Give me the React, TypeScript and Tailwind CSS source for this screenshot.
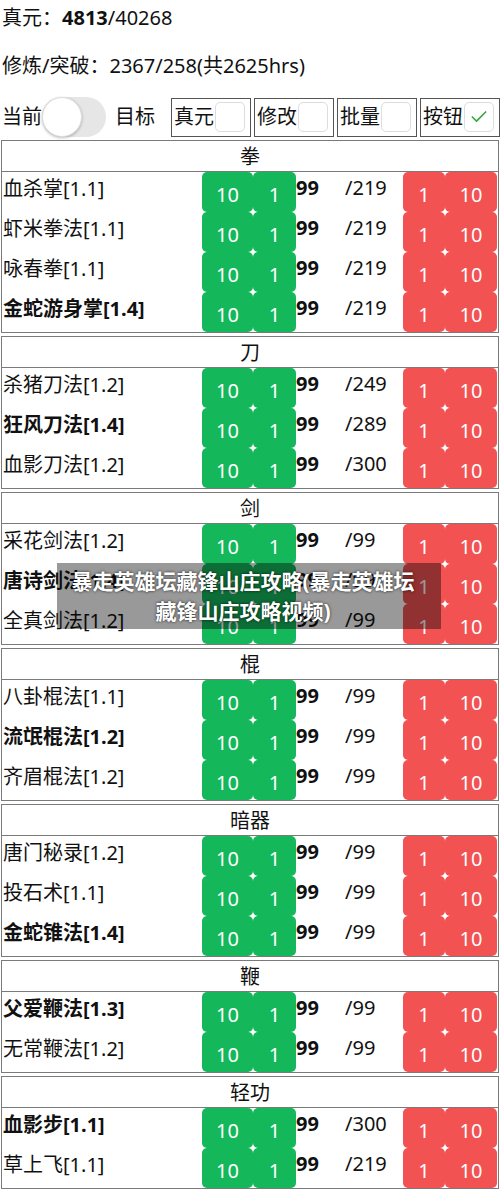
import { Check } from 'lucide-react';

type Skill = {
  name: string;
  bold?: boolean;
  max: number;
};

type Group = {
  title: string;
  skills: Skill[];
};

const groups: Group[] = [
  {
    title: '拳',
    skills: [
      { name: '血杀掌[1.1]', max: 219 },
      { name: '虾米拳法[1.1]', max: 219 },
      { name: '咏春拳[1.1]', max: 219 },
      { name: '金蛇游身掌[1.4]', bold: true, max: 219 },
    ],
  },
  {
    title: '刀',
    skills: [
      { name: '杀猪刀法[1.2]', max: 249 },
      { name: '狂风刀法[1.4]', bold: true, max: 289 },
      { name: '血影刀法[1.2]', max: 300 },
    ],
  },
  {
    title: '剑',
    skills: [
      { name: '采花剑法[1.2]', max: 99 },
      { name: '唐诗剑法[1.4]', bold: true, max: 99 },
      { name: '全真剑法[1.2]', max: 99 },
    ],
  },
  {
    title: '棍',
    skills: [
      { name: '八卦棍法[1.1]', max: 99 },
      { name: '流氓棍法[1.2]', bold: true, max: 99 },
      { name: '齐眉棍法[1.2]', max: 99 },
    ],
  },
  {
    title: '暗器',
    skills: [
      { name: '唐门秘录[1.2]', max: 99 },
      { name: '投石术[1.1]', max: 99 },
      { name: '金蛇锥法[1.4]', bold: true, max: 99 },
    ],
  },
  {
    title: '鞭',
    skills: [
      { name: '父爱鞭法[1.3]', bold: true, max: 99 },
      { name: '无常鞭法[1.2]', max: 99 },
    ],
  },
  {
    title: '轻功',
    skills: [
      { name: '血影步[1.1]', bold: true, max: 300 },
      { name: '草上飞[1.1]', max: 219 },
    ],
  },
];

const Option = ({ label, checked }: { label: string; checked?: boolean }) => (
  <div className="flex h-[39px] w-[80px] items-center border border-[#555] pl-[2px]">
    <span className="w-[40px]">{label}</span>
    <span className="ml-[1px] flex h-[30px] w-[30px] items-center justify-center rounded-[5px] border border-[#ddd] bg-white">
      {checked && <Check className="h-5 w-5 text-[#3aa843]" strokeWidth={2} />}
    </span>
  </div>
);

const Cell = ({ value, w, color }: { value: number; w: string; color: string }) => (
  <div
    className={`flex h-full items-center justify-center rounded-[5px] pt-[5px] text-[20px] text-white ${w} ${color}`}
  >
    {value}
  </div>
);

const SkillRow = ({ skill }: { skill: Skill }) => (
  <div className="flex h-[40px]">
    <div
      className={`w-[200px] pl-[1px] pt-[3px] text-[20px] leading-[28px] ${skill.bold ? 'font-bold' : ''}`}
    >
      {skill.name}
    </div>
    <Cell value={10} w="w-[51px]" color="bg-[#14b85b]" />
    <Cell value={1} w="w-[43px]" color="bg-[#14b85b]" />
    <div className="w-[49px] pt-[2px] text-[20px] font-bold leading-[28px]">99</div>
    <div className="w-[58px] pt-[2px] text-[20px] leading-[28px]">/{skill.max}</div>
    <Cell value={1} w="w-[42px]" color="bg-[#f25252]" />
    <Cell value={10} w="w-[52px]" color="bg-[#f25252]" />
  </div>
);

const Section = ({ group }: { group: Group }) => (
  <div className="ml-[1px] mt-[3px] w-[498px] border border-[#7a7a7a]">
    <div className="flex h-[31px] items-center justify-center border-b border-[#7a7a7a] pt-[2px] text-[20px]">
      {group.title}
    </div>
    {group.skills.map((s) => (
      <SkillRow key={s.name} skill={s} />
    ))}
  </div>
);

export default function App() {
  return (
    <div
      className="relative h-[1193px] w-[500px] overflow-hidden bg-white text-[19px] text-[#111]"
      style={{ fontFamily: '"Noto Sans", "Noto Sans CJK SC", sans-serif' }}
    >
      <div className="flex h-[36px] items-center pl-[2px] text-[20px]">
        真元：<span className="font-bold">4813</span>/40268
      </div>
      <div className="mt-[12px] flex h-[36px] items-center pl-[2px] text-[20px]">
        修炼/突破：2367/258(共2625hrs)
      </div>
      <div className="mt-[13px] flex h-[40px] items-center pl-[2px] text-[20px]">
        <span className="w-[40px]">当前</span>
        <div className="relative h-[40px] w-[64px] rounded-full bg-[#e6e6e6]">
          <div className="absolute left-0 top-0 h-[40px] w-[40px] rounded-full border border-[#ddd] bg-white shadow-[0_1px_3px_rgba(0,0,0,0.25)]" />
        </div>
        <span className="ml-[9px] w-[40px]">目标</span>
        <div className="ml-[16px] flex gap-[3px]">
          <Option label="真元" />
          <Option label="修改" />
          <Option label="批量" />
          <Option label="按钮" checked />
        </div>
      </div>

      {groups.map((g) => (
        <Section key={g.title} group={g} />
      ))}

      <div className="absolute left-[57px] top-[563px] flex h-[66px] w-[384px] flex-col items-center justify-center bg-black/40 pr-[12px] text-[21px] font-bold leading-[30px] text-white [text-shadow:0_0_3px_rgba(0,0,0,0.8)]">
        <span>暴走英雄坛藏锋山庄攻略(暴走英雄坛</span>
        <span>藏锋山庄攻略视频)</span>
      </div>
    </div>
  );
}
